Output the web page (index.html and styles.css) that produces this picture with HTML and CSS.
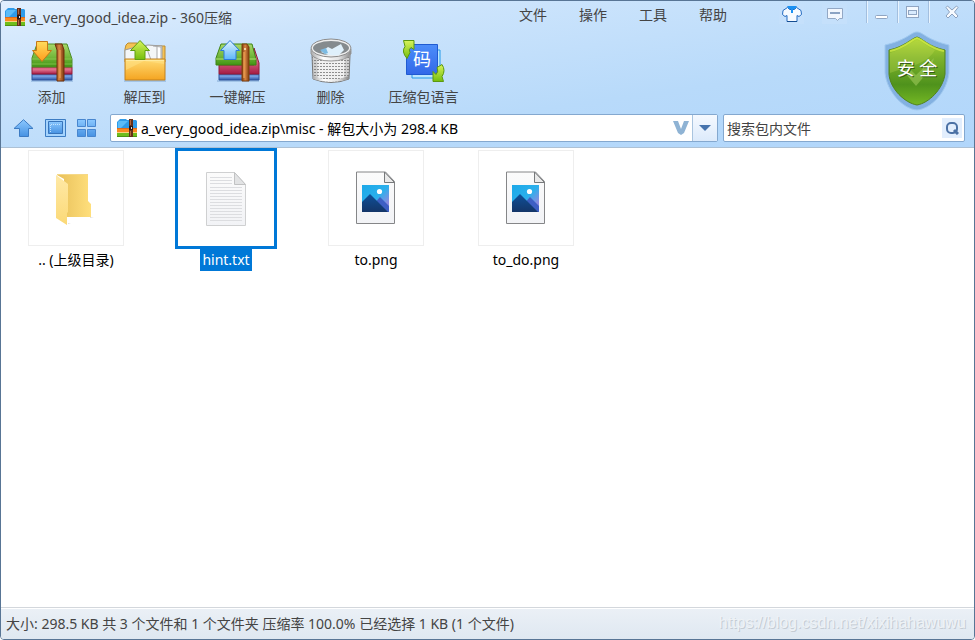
FILE: index.html
```html
<!DOCTYPE html>
<html lang="zh-CN">
<head>
<meta charset="utf-8">
<meta name="viewport" content="width=device-width, initial-scale=1">
<title>a_very_good_idea.zip - 360压缩</title>
<link rel="stylesheet" href="styles.css">
</head>
<body>
<svg class="defs" aria-hidden="true">
  <defs>
    <linearGradient id="green" x2="0" y2="1"><stop stop-color="#a9d86a"/><stop offset=".55" stop-color="#75b83c"/><stop offset="1" stop-color="#3f9413"/></linearGradient>
    <linearGradient id="red" x2="0" y2="1"><stop stop-color="#d8557a"/><stop offset=".4" stop-color="#e0708c"/><stop offset="1" stop-color="#a51b45"/></linearGradient>
    <linearGradient id="blue" x2="0" y2="1"><stop stop-color="#3c66b4"/><stop offset=".35" stop-color="#7ba6e6"/><stop offset="1" stop-color="#2c53a6"/></linearGradient>
    <linearGradient id="strap"><stop stop-color="#7a3a10"/><stop offset=".45" stop-color="#d98642"/><stop offset="1" stop-color="#7e3b0f"/></linearGradient>
    <linearGradient id="orange" x2="0" y2="1"><stop stop-color="#ffdc5c"/><stop offset="1" stop-color="#ff9c1c"/></linearGradient>
    <linearGradient id="sky" x2="0" y2="1"><stop stop-color="#e2f4ff"/><stop offset="1" stop-color="#5db6fa"/></linearGradient>
    <linearGradient id="lime" x2="0" y2="1"><stop stop-color="#d8f35c"/><stop offset="1" stop-color="#75be0c"/></linearGradient>
    <linearGradient id="folderfront" x2="0" y2="1"><stop stop-color="#ffdb72"/><stop offset="1" stop-color="#f5a421"/></linearGradient>
    <linearGradient id="nav" x2="0" y2="1"><stop stop-color="#8bc8ff"/><stop offset="1" stop-color="#4792e2"/></linearGradient>
    <linearGradient id="metal"><stop stop-color="#aaa"/><stop offset=".3" stop-color="#fff"/><stop offset=".7" stop-color="#e2e2e2"/><stop offset="1" stop-color="#888"/></linearGradient>
    <linearGradient id="code" x2="0" y2="1"><stop stop-color="#4c8dfa"/><stop offset="1" stop-color="#3268e8"/></linearGradient>
    <linearGradient id="shield" x2="0" y2="1"><stop stop-color="#b5d934"/><stop offset=".3" stop-color="#7fb32c"/><stop offset=".7" stop-color="#4f921c"/><stop offset="1" stop-color="#75b824"/></linearGradient>
    <linearGradient id="paper" x2="0" y2="1"><stop stop-color="#fbfbfb"/><stop offset="1" stop-color="#f2f3f6"/></linearGradient>
    <linearGradient id="fback" x2="1" y2="0"><stop stop-color="#e8c05a"/><stop offset="1" stop-color="#ffdf7c"/></linearGradient>
    <linearGradient id="ffront" x2="0" y2="1"><stop stop-color="#ffe9a6"/><stop offset="1" stop-color="#fbd977"/></linearGradient>
    <linearGradient id="photo" x2="1" y2="1"><stop stop-color="#1ca8e8"/><stop offset=".5" stop-color="#2bb0ec"/><stop offset=".8" stop-color="#8a8be0"/></linearGradient>
    <linearGradient id="mount" x2="0" y2="1"><stop stop-color="#0f5099"/><stop offset="1" stop-color="#143568"/></linearGradient>
    <pattern id="mesh" width="3" height="3" patternUnits="userSpaceOnUse"><rect width="3" height="3" fill="#f0f0f0"/><rect y="1" width="2" height="1" fill="#8e8e8e"/></pattern>
    <symbol id="zip" viewBox="0 0 20 18">
      <path d="M1 2l2-2h6l1 1h9l1 1v8H0V3z" fill="#2f9be8"/><path d="M1 3l1-1h9L4 9H1z" fill="#5bbcf8"/>
      <path d="M0 9h20v4H0z" fill="#fb8a1e"/><path d="M0 9h20v1H0z" fill="#e06b1c"/>
      <path d="M0 13h20v1H0z" fill="#f9d27c"/><path d="M0 14h20v4H0z" fill="#6fbd1c"/><path d="M0 17h20v1H0z" fill="#4d9414"/>
      <path d="M12 0h4v18h-4z" fill="#64301a"/><path d="M13 1h1v5h-1zm0 11h1v5h-1z" fill="#b0683f"/><path d="M12 7h4v4h-4z" fill="#2c1814"/><path d="M14 8h1v2h-1z" fill="#ddd"/>
    </symbol>
    <symbol id="picture" viewBox="0 0 40 54">
      <path d="M.5 1h29L38.500 10.500V52.500H.5z" fill="url(#paper)" stroke="#858688"/>
      <path d="M28.500 1v10.500h10z" fill="#e9e9e9" stroke="#77797b"/>
      <path d="M6 14h27v27H6z" fill="url(#photo)"/><circle cx="23.500" cy="20.500" r="2.600" fill="#fff"/>
      <path d="M17 34l7-8 9 9v6H20z" fill="#3e5fc4"/><path d="M6 31l8-8L32 41H6z" fill="url(#mount)"/>
    </symbol>
  </defs>
</svg>
<div class="window">
  <header class="head">
    <div class="titlebar">
      <svg class="zip" aria-hidden="true"><use href="#zip"/></svg>
      <h1 class="title">a_very_good_idea.zip - 360压缩</h1>
      <nav class="menu">
        <button type="button">文件</button><button type="button">操作</button><button type="button">工具</button><button type="button">帮助</button>
      </nav>
      <div class="extras">
        <button type="button" class="extra" aria-label="换肤"><svg width="20" height="17" viewBox="0 0 20 17"><path d="M5.500 1.500L1 4.500l-.5 4 2.500 2 2-1v6h10v-6l2 1 2.500-2-.5-4-4.500-3-2 2h-5z" fill="#f5faff" stroke="#246bc0"/><path d="M5 0h10l-2 3h-2v4H9V3H7z" fill="#1a91f3"/><path d="M5 15.500h10" stroke="#144d91"/></svg></button>
        <button type="button" class="extra" aria-label="反馈"><svg width="18" height="15" viewBox="0 0 18 15"><path d="M1.500 1.500h15v10h-3l-2 2-2-2h-8z" fill="#f2f7fe" stroke="#93a8c5"/><path d="M4 6h10" stroke="#8ba3c4" stroke-width="2"/></svg></button>
      </div>
      <div class="winbtns">
        <button type="button" aria-label="最小化"><svg width="14" height="14"><rect x=".5" y="10.500" width="12" height="3" rx="1" fill="#fff" stroke="#90a5c2"/></svg></button>
        <button type="button" aria-label="最大化"><svg width="14" height="14"><rect x=".5" y="1.500" width="12" height="11" fill="#f4f9ff" stroke="#90a5c2"/><rect x="2.500" y="5.500" width="8" height="4" fill="#d8eafd" stroke="#90a5c2"/></svg></button>
        <button type="button" class="close" aria-label="关闭"><svg width="14" height="14"><path d="M2.500 1L7 5l4.500-4L13 2.500 9.500 7l3.500 4-2 2-4-4-4 4-2-2 3.500-4L1 2.500z" fill="#f7fbff" stroke="#8da1bd"/></svg></button>
      </div>
    </div>
    <div class="toolbar">
      <button type="button" class="tool"><svg width="46" height="46" viewBox="0 0 46 46">
        <path d="M2 42h42v2H2z" fill="#7fa8d4" opacity=".5"/>
        <path d="M3 36h40v6H3z" fill="url(#blue)" stroke="#2d549c"/><path d="M3 29h40v7H3z" fill="url(#red)" stroke="#941c3b"/>
        <path d="M8 6h30l5 15v8H3v-9z" fill="url(#green)" stroke="#4e8d27"/><path d="M3 21h40M3 26h40" stroke="#9fd465" opacity=".6"/>
        <path d="M26 6h7l2 6v31h-7V12z" fill="url(#strap)" stroke="#70330d"/><path d="M31 12v28" stroke="#f0a65c"/>
        <path d="M7.500 3.500h11v9h4L13 23.500 3.500 12.500h4z" fill="url(#orange)" stroke="#c47717"/></svg><span>添加</span></button>
      <button type="button" class="tool"><svg width="46" height="46" viewBox="0 0 46 46">
        <path d="M2 42h42v2H2z" fill="#7fa8d4" opacity=".5"/><path d="M4 7l2-2h9l2 3h26v16H3V11z" fill="#f5c254" stroke="#bb8b30"/>
        <path d="M3 12l11-3 12-2 14 1v14H3z" fill="#f4f6f7" stroke="#9b9b9b"/><path d="M31 8l8 1v13h-4V9M24 8l5 14" fill="#fff" stroke="#aaa"/>
        <path d="M3 21h40v21H3z" fill="url(#folderfront)" stroke="#c08120"/><path d="M4 22.500h38" stroke="#fff0b1"/><path d="M4 32l18-9 20 3v-4H4z" fill="#ffe48a" opacity=".5"/>
        <path d="M18 2.500l9.500 10H23v9H13v-9H8.500z" fill="url(#lime)" stroke="#5f9e0e"/></svg><span>解压到</span></button>
      <button type="button" class="tool"><svg width="46" height="46" viewBox="0 0 46 46">
        <path d="M2 42h42v2H2z" fill="#7fa8d4" opacity=".5"/>
        <path d="M4 36h40v6H4z" fill="url(#blue)" stroke="#2d549c"/><path d="M39 10l5 15v11H4v-9h35z" fill="url(#red)" stroke="#941c3b"/>
        <path d="M6 6h31l4 15v6H1v-7z" fill="url(#green)" stroke="#3f8417"/><path d="M1 21h40" stroke="#b3e375"/>
        <path d="M27 6h5l2 3v34h-7z" fill="url(#strap)" stroke="#81400d"/><circle cx="30" cy="11" r="1" fill="#fff0c5"/><path d="M29 14v26" stroke="#ffb35f"/>
        <path d="M15 2.500l9.500 10H21v9H9v-9H5.500z" fill="url(#sky)" stroke="#2d7bdb"/></svg><span>一键解压</span></button>
      <button type="button" class="tool"><svg width="46" height="46" viewBox="0 0 46 46">
        <path d="M4 17l1 24q18 7 36 0l1-24z" fill="url(#mesh)" stroke="#777"/><path d="M4 17h5l1 25-5-2zM42 17h-5l-1 25 5-2z" fill="#777" opacity=".28"/>
        <path d="M5 38q18 7 36 0v3q-18 6-36 0z" fill="url(#metal)"/>
        <path d="M3 11v5q5 7 20 7t20-7v-5z" fill="url(#metal)" stroke="#999"/>
        <ellipse cx="23" cy="10" rx="19" ry="8" fill="#858b8e" stroke="#eee" stroke-width="2"/><ellipse cx="23" cy="10" rx="20" ry="9" fill="none" stroke="#8c8c8c"/>
        <path d="M13 14l7-5 4 2 9-5 3 6-5 5q-9 2-18-3z" fill="#dff0fb"/><path d="M12 12l6-2 2 5-3 1z" fill="#7dbbe2"/></svg><span>删除</span></button>
      <button type="button" class="tool"><svg width="46" height="46" viewBox="0 0 46 46">
        <path d="M11 12h28v28H11z" fill="#bce6ff" stroke="#259ae9"/><path d="M5.500 6.500h31v30h-31z" fill="url(#code)" stroke="#205bd1"/>
        <text x="21" y="28" class="glyph">码</text>
        <path d="M2.500 2.500h10.500v9l-3-2q-3 2-1 5l-3 6q-6-7-2-12z" fill="url(#lime)" stroke="#5c9811"/>
        <path d="M42.500 43.500h-10.500v-10l3 3q3-3 1-7l5-3q4 6 0 12z" fill="url(#lime)" stroke="#5c9811"/></svg><span>压缩包语言</span></button>
      <button type="button" class="safe"><svg viewBox="0 0 66 80" aria-hidden="true">
        <path d="M33 1c6 0 10 8 32 13v28c-2 19-18 36-32 37C19 78 3 61 1 42V14C23 9 27 1 33 1z" fill="#83b1e1" stroke="#a1c9ef"/>
        <path d="M33 6c5 1 12 10 28 13v24c-2 15-16 29-28 31C21 72 6 58 5 43V19C20 16 28 7 33 6z" fill="url(#shield)" stroke="#51821d"/>
        <path d="M6 20C21 17 28 8 33 7c5 1 12 10 27 13" fill="none" stroke="#d6ec48" stroke-width="2" opacity=".7"/>
        <path d="M6 22C22 17 28 10 33 9c5 1 10 7 18 10C42 34 26 35 6 42z" fill="#c5df57" opacity=".28"/>
        <path d="M22 43l5-4 5 5 18-17-3 10-15 18z" fill="#a9d163" opacity=".5"/></svg><span>安 全</span></button>
    </div>
    <div class="locbar">
      <div class="views">
        <button type="button" aria-label="向上"><svg width="21" height="18"><path d="M10.500.7L20 9.500h-4.500v8h-9v-8H1z" fill="url(#nav)" stroke="#3c7bc3"/></svg></button>
        <button type="button" aria-label="列表"><svg width="21" height="18"><path d="M.5.500h20v17H.5z" fill="#a4d3fd" stroke="#3c7cc3"/><path d="M3.500 2.500h14v12h-14z" fill="url(#nav)" stroke="#3774bb"/><path d="M5.500 13V5.500H15" fill="none" stroke="#c1e3ff" stroke-dasharray="1 1"/></svg></button>
        <button type="button" aria-label="图标"><svg width="19" height="18" fill="url(#nav)" stroke="#4886cf"><path d="M.5.500h8v7h-8zM10.500.500h8v7h-8zM.5 10.500h8v7h-8zM10.500 10.500h8v7h-8z"/></svg></button>
      </div>
      <div class="field address">
        <svg class="zip" aria-hidden="true"><use href="#zip"/></svg>
        <input type="text" aria-label="路径" value="a_very_good_idea.zip\misc - 解包大小为 298.4 KB">
        <svg class="vee" width="16" height="14" aria-hidden="true"><path d="M0 0h5l3 8 3-8h5l-5 12-3 2-3-2z" fill="#8fb3d4"/></svg>
        <button type="button" class="drop" aria-label="展开"><svg width="12" height="6"><path d="M0 0h12L6 6z" fill="#4673ad"/></svg></button>
      </div>
      <div class="field search">
        <input type="search" aria-label="搜索包内文件" placeholder="搜索包内文件">
        <button type="button" class="find" aria-label="搜索"><svg width="13" height="13" fill="none" stroke="#4b71a5" stroke-width="2"><rect x="1" y="1" width="10" height="10" rx="4"/><path d="M8 8l4 4" stroke-width="3"/></svg></button>
      </div>
    </div>
  </header>
  <main class="files">
    <button type="button" class="file"><span class="thumb"><svg width="40" height="54" viewBox="0 0 40 54">
      <path d="M12 52h3l-3 1zM34 46h4l-4 1z" fill="#ddd"/><path d="M1 4h31v26l3 3v13H8V8z" fill="url(#fback)"/><path d="M1 3.500h31" stroke="#f5d887"/><path d="M0 4l12 9v28l-1 1v12L0 47z" fill="url(#ffront)"/></svg></span><span class="name">.. (上级目录)</span></button>
    <button type="button" class="file selected"><span class="thumb"><svg width="40" height="54" viewBox="0 0 40 54">
      <path d="M.5.500h28l11 12v41H.5z" fill="url(#paper)" stroke="#cfd0d1"/><path d="M28.500.500v12h11z" fill="#e2e3e4" stroke="#c1c2c3"/>
      <path d="M4 5.500h22M4 8.500h22M4 11.500h22M4 15.500h32M4 18.500h32M4 21.500h32M4 24.500h32M4 27.500h32M4 30.500h32M4 33.500h32M4 36.500h32M4 39.500h32M4 42.500h32M4 45.500h32M4 48.500h32" stroke="#dcdde0"/></svg></span><span class="name">hint.txt</span></button>
    <button type="button" class="file"><span class="thumb"><svg width="40" height="54"><use href="#picture"/></svg></span><span class="name">to.png</span></button>
    <button type="button" class="file"><span class="thumb"><svg width="40" height="54"><use href="#picture"/></svg></span><span class="name">to_do.png</span></button>
  </main>
  <footer class="status">
    <span>大小: 298.5 KB 共 3 个文件和 1 个文件夹 压缩率 100.0% 已经选择 1 KB (1 个文件)</span>
    <span class="mark">https://blog.csdn.net/xixihahawuwu</span>
  </footer>
</div>
</body>
</html>
```
FILE: styles.css
```css
* { box-sizing: border-box; }
body {
  margin: 0;
  background: #fff;
  font: 14px/20px "Noto Sans", "Noto Sans CJK SC", sans-serif;
  color: #444;
}
button, input {
  margin: 0;
  padding: 0;
  border: 0;
  background: none;
  font: inherit;
  color: inherit;
}
svg { display: block; flex: none; }
.defs { position: absolute; width: 0; height: 0; }
.window {
  display: flex;
  flex-direction: column;
  min-height: 100vh;
  border: 1px solid #587595;
  border-radius: 4px;
  overflow: hidden;
}
.head {
  background: linear-gradient(172deg, #e1effe 0, #cce4fc 25%, #b8dafa 65%, #b1d6fb 100%);
  border-bottom: 1px solid #adc1d5;
}
.titlebar {
  display: flex;
  align-items: flex-start;
  height: 34px;
  padding-left: 4px;
}
.zip { width: 20px; height: 18px; }
.titlebar .zip { margin-top: 7px; }
.title {
  flex: 1;
  margin: 7px 0 0 4px;
  font-size: 14px;
  font-weight: 400;
  line-height: 20px;
  white-space: nowrap;
}
.menu { display: flex; gap: 32px; margin-top: 4px; }
.extras { display: flex; gap: 18px; margin: 3px 19px 0 52px; }
.extra {
  display: grid;
  place-items: center;
  width: 25px;
  height: 20px;
  background: #c5e0fb;
}
.winbtns { display: flex; }
.winbtns button {
  display: grid;
  place-items: center;
  width: 31px;
  height: 22px;
  border-left: 1px solid #a3bfdf;
  box-shadow: inset 1px 0 #e8f4ff;
}
.winbtns .close { width: 46px; }
.toolbar { display: flex; height: 76px; padding-left: 4px; }
.tool {
  display: flex;
  flex-direction: column;
  align-items: center;
  width: 93px;
  padding-top: 3px;
  gap: 3px;
}
.glyph { font: 400 18px "Noto Sans CJK SC", sans-serif; fill: #fff; text-anchor: middle; }
.safe {
  display: grid;
  place-items: center;
  width: 66px;
  height: 80px;
  margin: -4px 24px 0 auto;
  color: #fff;
  font-size: 18px;
  text-shadow: 1px 1px #355d17;
}
.safe svg { grid-area: 1 / 1; width: 66px; height: 80px; }
.safe span { grid-area: 1 / 1; padding-bottom: 6px; z-index: 1; }
.locbar {
  display: flex;
  align-items: center;
  gap: 5px;
  padding: 3px 9px 5px 12px;
}
.views { display: flex; gap: 11px; width: 92px; }
.field {
  display: flex;
  align-items: center;
  height: 28px;
  background: #fff;
  border: 1px solid #84a8cf;
  border-radius: 2px;
}
.field input { flex: 1; min-width: 0; height: 24px; outline: 0; }
.address { flex: 1; padding-left: 6px; color: #000; }
.address input { margin-left: 4px; }
.vee { margin-right: 3px; }
.drop {
  display: grid;
  place-items: center;
  width: 25px;
  height: 26px;
  border-left: 1px solid #a9c4df;
  background: linear-gradient(#f5f9ff, #dceafb);
}
.search { width: 242px; padding: 0 2px 0 3px; }
.search input { appearance: none; }
.search input::placeholder { color: #444; opacity: 1; }
.find {
  display: grid;
  place-items: center;
  width: 20px;
  height: 20px;
  background: #e2eefd;
}
.files {
  flex: 1;
  display: grid;
  grid-template-columns: repeat(auto-fill, 150px);
  align-content: start;
  color: #000;
}
.file {
  display: flex;
  flex-direction: column;
  align-items: center;
}
.thumb {
  display: grid;
  place-items: center;
  width: 96px;
  height: 96px;
  margin: 2px 0 3px;
  border: 1px solid #eee;
}
.selected .thumb { width: 102px; height: 101px; margin: 0; border: 3px solid #0078d7; }
.name { padding: 1px 2px; }
.selected .name { background: #0078d7; color: #fff; }
.status {
  display: flex;
  align-items: center;
  justify-content: space-between;
  height: 32px;
  padding: 0 8px 0 5px;
  background: linear-gradient(#ebf0f6, #dfe8f1);
  border-top: 1px solid #d3d7dc;
  box-shadow: inset 0 1px #fff;
  white-space: nowrap;
}
.mark {
  padding-bottom: 2px;
  font: 16px/20px "Liberation Sans", sans-serif;
  color: #eef2f6;
  text-shadow: 1px 1px #c5ccd4;
}
```
